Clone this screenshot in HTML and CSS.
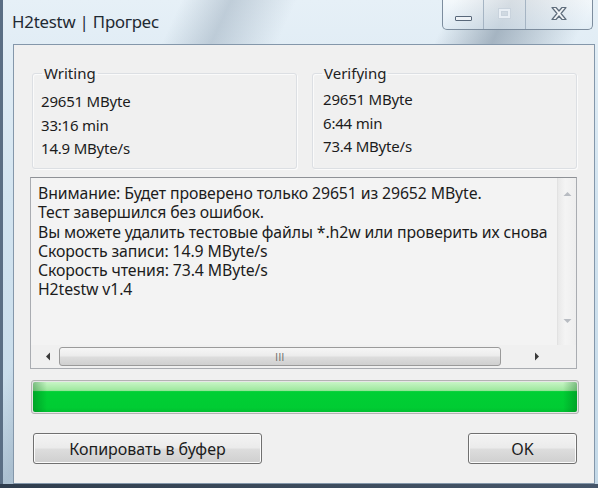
FILE: index.html
```html
<!DOCTYPE html>
<html>
<head>
<meta charset="utf-8">
<link rel="stylesheet" href="styles.css">
</head>
<body>
<div class="window">
  <div class="titlebar">
    <div class="title">H2testw | Прогрес</div>
    <div class="controls">
      <div class="ctl ctl-min"><span class="min-glyph"></span></div>
      <div class="ctl ctl-max"><span class="max-glyph"></span></div>
      <div class="ctl ctl-close">
        <svg width="18" height="15" viewBox="0 0 18 15">
          <path d="M2 1.5h4l3 3.5 3-3.5h4l-5 6 5 6h-4l-3-3.5-3 3.5h-4l5-6z" fill="#f4f6f8" stroke="#5f6d7c" stroke-width="1.2" stroke-linejoin="round"/>
        </svg>
      </div>
    </div>
  </div>
  <div class="client">
    <div class="groups">
      <fieldset class="group group-left">
        <legend>Writing</legend>
        <div class="val">29651 MByte</div>
        <div class="val">33:16 min</div>
        <div class="val">14.9 MByte/s</div>
      </fieldset>
      <fieldset class="group group-right">
        <legend>Verifying</legend>
        <div class="val">29651 MByte</div>
        <div class="val">6:44 min</div>
        <div class="val">73.4 MByte/s</div>
      </fieldset>
    </div>
    <div class="memo">
      <div class="memo-text">Внимание: Будет проверено только 29651 из 29652 MByte.
Тест завершился без ошибок.
Вы можете удалить тестовые файлы *.h2w или проверить их снова
Скорость записи: 14.9 MByte/s
Скорость чтения: 73.4 MByte/s
H2testw v1.4</div>
      <div class="vscroll">
        <svg width="9" height="6" viewBox="0 0 9 6"><path d="M0.5 5L4.5 1 8.5 5z" fill="#b8bcc2"/></svg>
        <svg width="9" height="6" viewBox="0 0 9 6"><path d="M0.5 1L4.5 5 8.5 1z" fill="#b8bcc2"/></svg>
      </div>
      <div class="hscroll">
        <svg class="arr" width="6" height="9" viewBox="0 0 6 9"><path d="M5 0.5L1 4.5 5 8.5z" fill="#3a3a3a"/></svg>
        <div class="thumb"><span class="grip">III</span></div>
        <svg class="arr" width="6" height="9" viewBox="0 0 6 9"><path d="M1 0.5L5 4.5 1 8.5z" fill="#3a3a3a"/></svg>
      </div>
      <div class="corner"></div>
    </div>
    <div class="progress"><div class="fill"></div></div>
    <div class="buttons">
      <button class="btn btn-copy">Копировать в буфер</button>
      <button class="btn btn-ok">OK</button>
    </div>
  </div>
  <div class="bottom-strip"></div>
</div>
</body>
</html>
```

FILE: styles.css
```css
html, body {
  margin: 0;
  padding: 0;
}
body {
  width: 598px;
  height: 488px;
  overflow: hidden;
  font-family: "Noto Sans", "Open Sans", sans-serif;
  color: #1c1c1c;
}
.window {
  width: 598px;
  height: 488px;
  display: flex;
  flex-direction: column;
  background:
    linear-gradient(115deg, transparent 0 22%, rgba(120,140,160,0.35) 28%, transparent 36%, transparent 55%, rgba(90,110,130,0.45) 62%, transparent 72%),
    linear-gradient(180deg, #e6f0f7 0%, #d3e4f0 40%, #c4d9e8 100%);
  box-shadow: inset 3px 0 0 #5a6e84;
}
.titlebar {
  height: 44px;
  display: flex;
  justify-content: space-between;
  align-items: flex-start;
  flex: none;
}
.title {
  margin: 11px 0 0 12px;
  font-size: 16.8px;
  line-height: 22px;
  color: #1f2a33;
  letter-spacing: -0.2px;
}
.controls {
  display: flex;
  margin-right: 5px;
  height: 29px;
  border: 1px solid #7d8d9e;
  border-top: none;
  border-radius: 0 0 5px 5px;
  background: linear-gradient(180deg, rgba(255,255,255,0.55), rgba(225,236,245,0.55));
  overflow: hidden;
}
.ctl {
  display: flex;
  align-items: center;
  justify-content: center;
  height: 29px;
}
.ctl-min { width: 40px; border-right: 1px solid #a5b4c3; }
.ctl-max { width: 41px; border-right: 1px solid #a5b4c3; }
.ctl-close { width: 66px; }
.min-glyph {
  width: 15px;
  height: 3px;
  margin-top: 8px;
  border: 1px solid #59687a;
  border-radius: 1px;
  background: #eef2f6;
}
.max-glyph {
  width: 11px;
  height: 9px;
  border: 1px solid #c9d3dd;
  box-shadow: inset 0 0 0 2px #e9eff5, inset 0 0 0 3px #c9d3dd;
  margin-top: -2px;
}
.ctl-close svg { margin-top: -2px; }

.client {
  flex: none;
  height: 440px;
  margin-left: 13px;
  width: 582px;
  border: 1px solid #8497aa;
  background: #f0f0f0;
  box-sizing: border-box;
  padding: 19px 17px 0 16px;
  display: flex;
  flex-direction: column;
}
.groups {
  display: flex;
  gap: 15px;
  margin-left: 2px;
  height: 105px;
  flex: none;
}
.group {
  margin: 0;
  padding: 0 0 0 8px;
  border: 1px solid #dcdfe3;
  border-radius: 3px;
  box-shadow: inset 1px 1px 0 #fafafa, 1px 1px 0 #fbfbfb;
  height: 105px;
  box-sizing: border-box;
  font-size: 15px;
  min-width: 0;
}
.group-left { width: 265px; }
.group-right { width: 265px; padding-left: 10px; }
.group legend {
  font-size: 15px;
  padding: 0 2px;
  margin-left: 1px;
  line-height: 19px;
  color: #222;
}
.group-right legend { margin-left: -1px; }
.val {
  line-height: 23.5px;
  white-space: nowrap;
  letter-spacing: -0.2px;
}
.val:first-of-type { margin-top: 7px; }
.group-right .val:first-of-type { margin-top: 5px; }

.memo {
  flex: none;
  margin-top: 8px;
  height: 192px;
  border: 1px solid #a9acb1;
  border-top-color: #8e9196;
  background: #f3f3f3;
  display: grid;
  grid-template-columns: 1fr 19px;
  grid-template-rows: 1fr 23px;
  box-sizing: border-box;
}
.memo-text {
  white-space: pre;
  overflow: hidden;
  font-size: 15.8px;
  line-height: 19.3px;
  padding: 6px 0 0 7px;
  color: #1c1c1c;
  letter-spacing: -0.1px;
}
.vscroll {
  background: linear-gradient(90deg, #e9e9e9, #f4f4f4 40%, #eeeeee);
  border-left: 1px solid #e2e2e2;
  display: flex;
  flex-direction: column;
  justify-content: space-between;
  align-items: center;
  padding: 13px 0 21px;
}
.hscroll {
  display: flex;
  align-items: center;
  background: #f0f0f0;
}
.hscroll .arr { flex: none; margin: 0 8px 0 14px; }
.hscroll .arr:last-child { margin: 0 17px 0 33px; }
.thumb {
  flex: 1;
  height: 19px;
  border: 1px solid #9a9a9a;
  border-radius: 3px;
  background: linear-gradient(180deg, #f6f6f6 0%, #ececec 45%, #dcdcdc 55%, #d0d0d0 100%);
  display: flex;
  align-items: center;
  justify-content: center;
  box-sizing: border-box;
}
.grip {
  font-size: 9px;
  letter-spacing: 0.5px;
  color: #6a6a6a;
  font-family: "DejaVu Sans", sans-serif;
  transform: scaleY(1.2);
}
.corner { background: #f0f0f0; }

.progress {
  flex: none;
  margin-top: 11px;
  margin-left: 1px;
  width: 548px;
  height: 34px;
  border: 1px solid #b3b3b3;
  border-radius: 3px;
  box-sizing: border-box;
  background: #e6e6e6;
  padding: 1px;
}
.fill {
  height: 100%;
  border-radius: 2px;
  background:
    linear-gradient(90deg, rgba(0,90,20,0.35) 0, rgba(0,90,20,0) 14px, rgba(0,90,20,0) calc(100% - 14px), rgba(0,90,20,0.35) 100%),
    linear-gradient(180deg, #c8f5c6 0%, #9ee89e 28%, #00cf34 32%, #00cc33 85%, #00c030 100%);
}

.buttons {
  flex: none;
  display: flex;
  justify-content: space-between;
  margin-top: 19px;
  padding-left: 3px;
}
.btn {
  height: 31px;
  border: 1px solid #707070;
  border-radius: 3px;
  background: linear-gradient(180deg, #f3f3f3 0%, #ebebeb 48%, #dddddd 52%, #cfcfcf 100%);
  box-shadow: inset 0 0 0 1px #fbfbfb;
  font-family: "Noto Sans", "Open Sans", sans-serif;
  font-size: 16px;
  color: #1c1c1c;
  padding: 0;
}
.btn-copy { width: 229px; }
.btn-ok { width: 109px; }

.bottom-strip {
  flex: 1;
  background: linear-gradient(90deg, #2f3d4d, #3c4b5c 50%, #46566a);
}
```
